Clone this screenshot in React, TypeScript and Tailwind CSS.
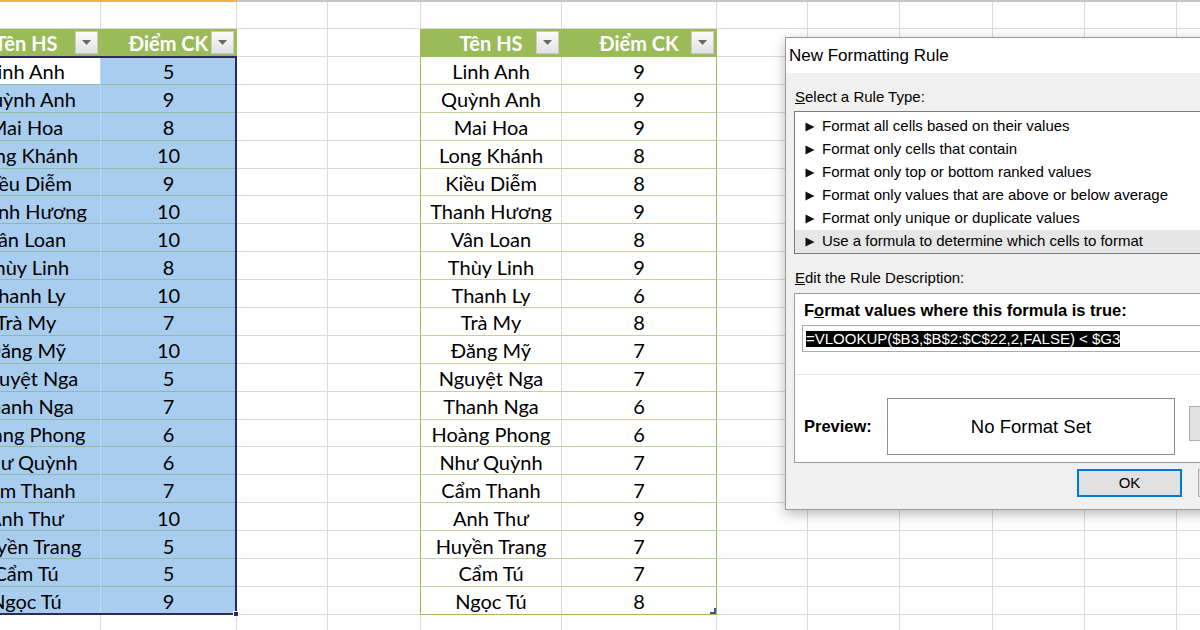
import React from 'react';

// column widths of the visible sheet, starting 48px left of the page edge
const COLW = [
  'w-[149px]', 'w-[136px]', 'w-[91px]', 'w-[93px]', 'w-[141px]', 'w-[155px]',
  'w-[91px]', 'w-[92px]', 'w-[93px]', 'w-[92px]', 'w-[92px]', 'w-[92px]',
];

const NAMES = [
  'Linh Anh', 'Quỳnh Anh', 'Mai Hoa', 'Long Khánh', 'Kiều Diễm', 'Thanh Hương', 'Vân Loan',
  'Thùy Linh', 'Thanh Ly', 'Trà My', 'Đăng Mỹ', 'Nguyệt Nga', 'Thanh Nga', 'Hoàng Phong',
  'Như Quỳnh', 'Cẩm Thanh', 'Anh Thư', 'Huyền Trang', 'Cẩm Tú', 'Ngọc Tú',
];
const LEFT_SCORES = [5, 9, 8, 10, 9, 10, 10, 8, 10, 7, 10, 5, 7, 6, 6, 7, 10, 5, 5, 9];
const MID_SCORES = [9, 9, 9, 8, 8, 9, 8, 9, 6, 8, 7, 7, 6, 6, 7, 7, 9, 7, 7, 8];

const RULES = [
  'Format all cells based on their values',
  'Format only cells that contain',
  'Format only top or bottom ranked values',
  'Format only values that are above or below average',
  'Format only unique or duplicate values',
  'Use a formula to determine which cells to format',
];

type RowKind = 'top' | 'head' | 'data' | 'end';

function cellClass(kind: RowKind, col: number, i = 0) {
  let bg = '';
  let br = 'border-r-[#dadada]';
  let bb = 'border-b-[#dadada]';
  if (kind === 'head') {
    if (col === 0 || col === 1 || col === 4 || col === 5) {
      bg = 'bg-[#9bbb59]';
      br = 'border-r-[#9bbb59]';
      bb = 'border-b-[#9bbb59]';
    }
    if (col === 3) br = 'border-r-[#9bbb59]';
  }
  if (kind === 'data') {
    if (col === 0) {
      bg = i === 0 ? 'bg-white' : 'bg-[#a9cdef]';
      br = 'border-r-[#c3d9ee]';
      bb = 'border-b-[#91b8a4]';
    }
    if (col === 1) {
      bg = 'bg-[#a9cdef]';
      bb = 'border-b-[#91b8a4]';
    }
    if (col === 3) br = 'border-r-[#9bbb59]';
    if (col === 4) bb = i === 19 ? 'border-b-[#9bbb59]' : 'border-b-[#bfd49a]';
    if (col === 5) {
      br = 'border-r-[#9bbb59]';
      bb = i === 19 ? 'border-b-[#9bbb59]' : 'border-b-[#bfd49a]';
    }
  }
  const pad = kind === 'data' ? 'pt-[2px]' : '';
  return `${COLW[col]} relative shrink-0 border-r border-b ${br} ${bb} ${bg} ${pad} flex items-center justify-center`;
}

function FilterButton() {
  return (
    <span className="absolute right-[2px] top-[2px] flex h-[23px] w-[23px] items-center justify-center border border-[#c9c9c9] bg-linear-to-b from-[#fbfbfb] to-[#e2e2e2]">
      <svg width="9" height="5" viewBox="0 0 9 5">
        <path d="M0 0h9L4.5 5z" fill="#6a6a6a" />
      </svg>
    </span>
  );
}

function SheetRow({ kind, i = 0 }: { kind: RowKind; i?: number }) {
  const h = kind === 'top' ? 'h-[27px]' : kind === 'head' ? 'h-[28px]' : kind === 'data' ? 'h-[27.9px]' : 'h-[28px]';
  return (
    <div className={`flex ${h}`}>
      {COLW.map((_, col) => {
        let content: React.ReactNode = null;
        if (kind === 'head' && (col === 0 || col === 4)) {
          content = (
            <>
              <span className="font-bold text-white">Tên HS</span>
              <FilterButton />
            </>
          );
        }
        if (kind === 'head' && (col === 1 || col === 5)) {
          content = (
            <>
              <span className="font-bold text-white">Điểm CK</span>
              <FilterButton />
            </>
          );
        }
        if (kind === 'data') {
          if (col === 0 || col === 4) content = NAMES[i];
          if (col === 1) content = LEFT_SCORES[i];
          if (col === 5) {
            content = (
              <>
                {MID_SCORES[i]}
                {i === 19 && (
                  <svg className="absolute bottom-0 right-0" width="6" height="6" viewBox="0 0 6 6">
                    <path d="M4 0H6V6H0V4H4Z" fill="#3f52a5" />
                  </svg>
                )}
              </>
            );
          }
        }
        return (
          <div key={col} className={cellClass(kind, col, i)}>
            {content}
          </div>
        );
      })}
    </div>
  );
}

function Sheet() {
  return (
    <div className="relative ml-[-48px] font-['Lato',sans-serif] text-[20px] text-black">
      <div className="flex h-[2px]">
        <div className="w-[285px] bg-[#e7b948]" />
        <div className="flex-1 bg-[#c6c6c6]" />
      </div>
      <SheetRow kind="top" />
      <SheetRow kind="head" />
      {NAMES.map((_, i) => (
        <SheetRow key={i} kind="data" i={i} />
      ))}
      <SheetRow kind="end" />

      {/* selection box over the left table */}
      <div className="absolute left-0 top-[56px] h-[559px] w-[285px] border-2 border-[#2d2b5c]">
        <div className="absolute -bottom-[4px] -right-[4px] h-[6px] w-[6px] border border-white bg-[#2d2b5c]" />
      </div>
    </div>
  );
}

function Arrow() {
  return (
    <span className="flex w-[17px] items-center">
      <svg width="10" height="10" viewBox="0 0 10 10">
        <path d="M0.5 0.5L9.5 5L0.5 9.5Z" fill="#111" />
      </svg>
    </span>
  );
}

function RuleDialog() {
  return (
    <div className="absolute left-[785px] top-[37px] h-[473px] w-[540px] border border-[#9a9a9a] bg-[#f0f0f0] font-['Liberation_Sans',Arial,sans-serif] text-black shadow-[0_4px_12px_rgba(0,0,0,0.28)]">
      <div className="flex h-[35px] items-center bg-white pl-[3px] text-[17px]">New Formatting Rule</div>

      <div className="px-[8px]">
        <div className="mt-[14px] h-[20px] pl-[1px] text-[15px] leading-[20px]">
          <span className="underline">S</span>elect a Rule Type:
        </div>
        <div className="mt-[4px] h-[143px] border border-[#7a7a7a] bg-white pt-[3px]">
          {RULES.map((r, i) => (
            <div
              key={r}
              className={`flex h-[23px] items-center pl-[10px] text-[15px] ${i === 5 ? 'bg-[#e6e6e6]' : ''}`}
            >
              <Arrow />
              {r}
            </div>
          ))}
        </div>

        <div className="mt-[14px] h-[20px] pl-[1px] text-[15px] leading-[20px]">
          <span className="underline">E</span>dit the Rule Description:
        </div>
        <div className="mt-[5px] h-[170px] border border-[#9d9d9d] bg-white pt-[6px]">
          <div className="h-[20px] pl-[9px] text-[16.5px] font-bold leading-[20px]">
            F<span className="underline">o</span>rmat values where this formula is true:
          </div>
          <div className="ml-[7px] mt-[5px] flex h-[27px] items-center border border-[#ababab] bg-white pl-[3px]">
            <span className="bg-black text-[15px] leading-[16px] text-white">=VLOOKUP($B3,$B$2:$C$22,2,FALSE) &lt; $G3</span>
          </div>
          <div className="mt-[22px] border-t border-[#e6e6e6]" />
          <div className="mt-[23px] flex">
            <div className="flex w-[92px] items-center pl-[9px] text-[16.5px] font-bold">Preview:</div>
            <div className="flex h-[57px] w-[288px] items-center justify-center border border-[#8e8e8e] bg-white text-[18.5px]">
              No Format Set
            </div>
            <div className="ml-[14px] mt-[8px] flex h-[35px] w-[90px] items-center justify-center border border-[#adadad] bg-[#e1e1e1] text-[15px]">
              Format...
            </div>
          </div>
        </div>

        <div className="mt-[6px] flex">
          <div className="ml-[283px] flex h-[28px] w-[105px] items-center justify-center border-2 border-[#0078d7] bg-[#e1e1e1] text-[15px]">
            OK
          </div>
          <div className="ml-[16px] flex h-[28px] w-[105px] items-center justify-center border border-[#adadad] bg-[#e1e1e1] text-[15px]">
            Cancel
          </div>
        </div>
      </div>
    </div>
  );
}

export default function App() {
  return (
    <div className="relative h-[630px] w-[1200px] overflow-hidden bg-white">
      <Sheet />
      <RuleDialog />
    </div>
  );
}
